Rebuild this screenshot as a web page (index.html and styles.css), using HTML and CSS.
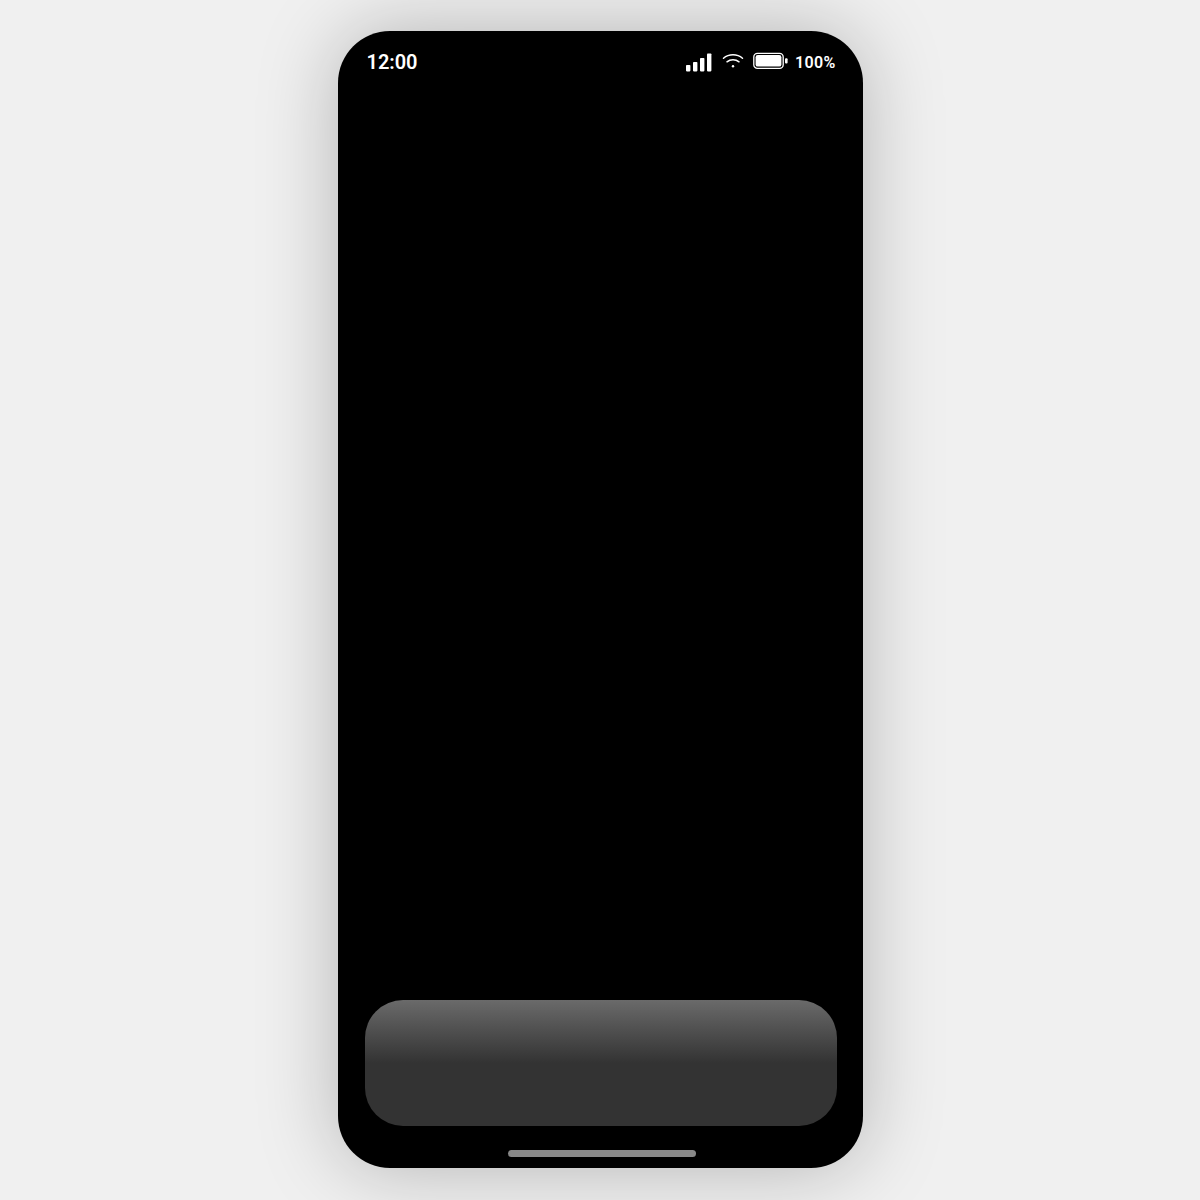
FILE: index.html
```html
<!DOCTYPE html>
<html lang="en">
<head>
<meta charset="utf-8">
<title>Phone</title>
<link rel="stylesheet" href="styles.css">
</head>
<body>
<main class="phone">
  <header class="status">
    <span class="time">12:00</span>
    <div class="indicators">
      <svg class="signal" width="26" height="19" viewBox="0 0 26 19"><rect x="0" y="12" width="4.4" height="6.4" rx="0.8"/><rect x="7" y="9" width="4.4" height="9.4" rx="0.8"/><rect x="14" y="5" width="4.4" height="13.4" rx="0.8"/><rect x="21" y="0.5" width="4.4" height="17.9" rx="0.8"/></svg>
      <svg class="wifi" width="22" height="17" viewBox="0 0 22 17"><path d="M1.5 6.2C6.8 1.6 15.2 1.6 20.5 6.2" /><path d="M5 9.8C8.4 7 13.6 7 17 9.8"/><circle cx="11" cy="14.2" r="1.2"/></svg>
      <svg class="battery" width="36" height="18" viewBox="0 0 36 18"><rect x="0.8" y="1.3" width="29.4" height="15" rx="3.6" class="shell"/><rect x="2.6" y="3" width="25.8" height="11.6" rx="2.2"/><rect x="32" y="6.2" width="2.6" height="5.4" rx="1"/></svg>
      <span class="percent">100%</span>
    </div>
  </header>
  <div class="content"></div>
  <section class="panel"></section>
  <div class="home"></div>
</main>
</body>
</html>
```
FILE: styles.css
```css
* { box-sizing: border-box; }
html, body { height: 100%; }
body {
  margin: 0;
  padding-top: 31px;
  background: #f0f0f0;
  display: flex;
  justify-content: center;
  align-items: flex-start;
  font-family: Roboto, "Liberation Sans", sans-serif;
}
.phone {
  width: 525px;
  height: 1137px;
  background: #000;
  border-radius: 52px;
  box-shadow: 0 0 80px rgba(0, 0, 0, 0.25);
  display: flex;
  flex-direction: column;
  padding: 18px 27px 11px 27px;
  color: #fff;
}
.status {
  height: 26px;
  display: flex;
  align-items: center;
  justify-content: space-between;
  padding-left: 2px;
}
.time { font-size: 20px; font-weight: 600; letter-spacing: -0.05px; }
.indicators { display: flex; align-items: center; }
.signal { fill: #fff; margin-right: 10px; margin-top: 1px; }
.wifi { margin-right: 9px; margin-top: -3px; }
.wifi path { fill: none; stroke: #fff; stroke-width: 1.5; stroke-linecap: round; }
.wifi circle { fill: #fff; }
.battery { fill: #fff; margin-right: 6px; margin-top: -2px; }
.battery .shell { fill: none; stroke: #fff; stroke-width: 1.3; }
.percent { font-size: 16px; font-weight: 600; letter-spacing: 0.3px; }
.content { flex: 1; }
.panel {
  height: 126px;
  width: 472px;
  border-radius: 38px;
  background: linear-gradient(to bottom, #6a6a6a 0%, #333 50%, #333 100%);
}
.home {
  width: 188px;
  height: 7px;
  margin: 24px 0 0 143px;
  border-radius: 4px;
  background: #888;
}
```
